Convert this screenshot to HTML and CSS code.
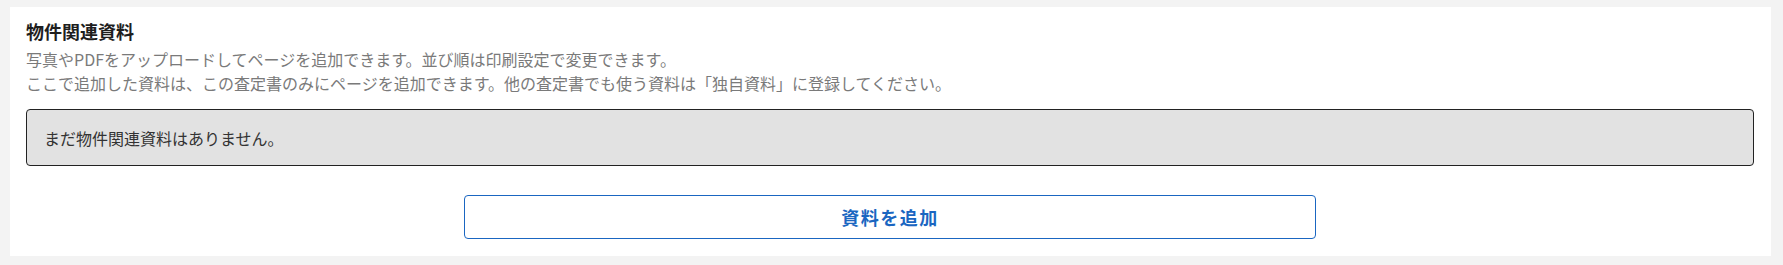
FILE: index.html
```html
<!DOCTYPE html>
<html lang="ja">
<head>
	<meta charset="utf-8">
	<title>物件関連資料</title>
	<link rel="stylesheet" href="styles.css">
</head>
<body>
	<section class="panel">
		<h2 class="panel_title">物件関連資料</h2>
		<p class="panel_desc">
			写真やPDFをアップロードしてページを追加できます。並び順は印刷設定で変更できます。<br>
			ここで追加した資料は、この査定書のみにページを追加できます。他の査定書でも使う資料は「独自資料」に登録してください。
		</p>
		<div class="empty">まだ物件関連資料はありません。</div>
		<div class="actions">
			<button type="button" class="btn_add">資料を追加</button>
		</div>
	</section>
</body>
</html>
```

FILE: styles.css
```css
html, body { margin: 0; padding: 0; }
body {
	background: #f3f3f3;
	padding: 7px 12px 9px 10px;
	font-family: "Noto Sans CJK JP", "Noto Sans", sans-serif;
	color: #222;
}

.panel { background: #fff; padding: 11px 17px 17px 16px; }
.panel_title { margin: 0; font-size: 18px; line-height: 27px; font-weight: bold; color: #1e1e1e; }
.panel_desc { margin: 2px 0 0; font-size: 16px; line-height: 24px; color: #7a7a7a; }

.empty {
	margin-top: 14px;
	height: 55px;
	display: flex;
	align-items: center;
	padding: 0 17px;
	background: #e2e2e2;
	border: 1px solid #222;
	border-radius: 4px;
	font-size: 16px;
	color: #333;
}

.actions { display: flex; justify-content: center; margin-top: 29px; }
.btn_add {
	width: 852px;
	height: 44px;
	background: #fff;
	border: 1px solid #1a66c1;
	border-radius: 4px;
	color: #1a66c1;
	font-family: inherit;
	font-size: 18px;
	font-weight: bold;
	letter-spacing: 1.5px;
	cursor: pointer;
}
```
